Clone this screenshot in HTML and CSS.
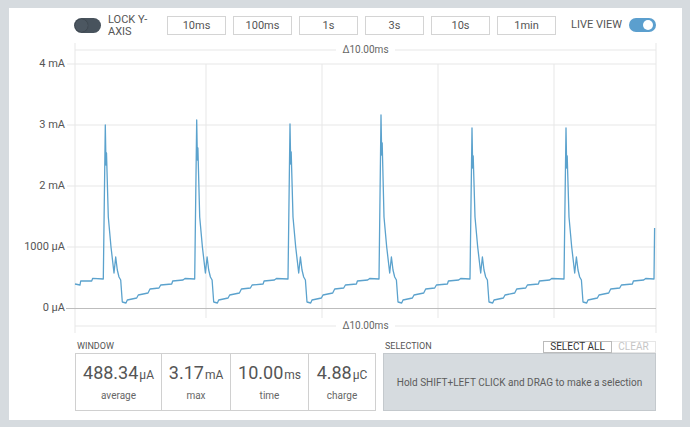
FILE: index.html
```html
<!DOCTYPE html>
<html lang="en">
<head>
  <meta charset="UTF-8">
  <title>Power Profiler</title>
  <link rel="stylesheet" href="styles.css">
</head>
<body>
  <div class="panel">
    <div class="toolbar">
      <div class="toggle toggle-off"><span class="knob"></span></div>
      <div class="lock-label">LOCK Y-AXIS</div>
      <div class="windows">
        <button class="win-btn">10ms</button>
        <button class="win-btn">100ms</button>
        <button class="win-btn">1s</button>
        <button class="win-btn">3s</button>
        <button class="win-btn">10s</button>
        <button class="win-btn">1min</button>
      </div>
      <div class="live">
        <span>LIVE VIEW</span>
        <div class="toggle toggle-on"><span class="knob"></span></div>
      </div>
    </div>

    <svg class="chart" width="673" height="294" viewBox="9 43 673 294">
      <g class="frame">
        <line x1="75" y1="42" x2="75" y2="333" />
        <line x1="656" y1="42" x2="656" y2="333" />
        <line x1="75" y1="50" x2="336" y2="50" />
        <line x1="395" y1="50" x2="656" y2="50" />
        <line x1="75" y1="326" x2="336" y2="326" />
        <line x1="395" y1="326" x2="656" y2="326" />
      </g>
      <g class="grid">
        <line x1="67" y1="64" x2="656" y2="64" />
        <line x1="67" y1="125" x2="656" y2="125" />
        <line x1="67" y1="186" x2="656" y2="186" />
        <line x1="67" y1="247" x2="656" y2="247" />
        <line x1="206" y1="64" x2="206" y2="318" />
        <line x1="322" y1="64" x2="322" y2="318" />
        <line x1="438" y1="64" x2="438" y2="318" />
        <line x1="554" y1="64" x2="554" y2="318" />
      </g>
      <line class="zero" x1="66" y1="308.5" x2="656" y2="308.5" />
      <g class="ylabels">
        <text x="65" y="64">4 mA</text>
        <text x="65" y="125">3 mA</text>
        <text x="65" y="186">2 mA</text>
        <text x="65" y="247">1000 µA</text>
        <text x="65" y="308">0 µA</text>
      </g>
      <text class="delta" x="365.5" y="50">Δ10.00ms</text>
      <text class="delta" x="365.5" y="326">Δ10.00ms</text>
      <path id="trace" class="trace" d="" />
    </svg>

    <div class="bottom">
      <div class="window">
        <div class="section-head">
          <span class="section-title">WINDOW</span>
        </div>
        <div class="stats">
          <div class="stat"><div class="value">488.34<small>µA</small></div><div class="name">average</div></div>
          <div class="stat"><div class="value">3.17<small>mA</small></div><div class="name">max</div></div>
          <div class="stat"><div class="value">10.00<small>ms</small></div><div class="name">time</div></div>
          <div class="stat"><div class="value">4.88<small>µC</small></div><div class="name">charge</div></div>
        </div>
      </div>
      <div class="selection">
        <div class="section-head">
          <span class="section-title">SELECTION</span>
          <div class="sel-buttons">
            <button class="sel-btn">SELECT ALL</button>
            <button class="sel-btn sel-btn-disabled">CLEAR</button>
          </div>
        </div>
        <div class="sel-box">Hold SHIFT+LEFT CLICK and DRAG to make a selection</div>
      </div>
    </div>
  </div>

  <script>
    // spike x (peak) and peak y for each cycle
    const spikes = [[105.3, 125], [196.7, 120], [290, 124], [381, 115], [472, 128], [566, 128]];
    // [dx from rise, y, relative to peak?]
    const cycle = [
      [0, 279, false], [2, 0, true], [2.7, 40, true], [3.2, 28, true],
      [5, 217], [7.7, 247], [10.7, 273], [12.4, 257], [14, 270], [15.7, 277],
      [17.4, 280], [19, 302], [22.7, 303], [24, 300], [33.4, 298], [35, 295],
      [44.7, 293], [46.7, 289], [55.7, 288], [57.4, 285], [68.4, 284],
      [69.4, 281], [79.7, 280], [81.7, 278.5]
    ];

    const pts = [[75, 284], [80, 285], [80.7, 281], [91.7, 281], [92.7, 278.3]];
    for (const [peakX, peakY] of spikes) {
      const rise = peakX - 2;
      for (const [dx, y, rel] of cycle) {
        pts.push([rise + dx, rel ? peakY + y : y]);
      }
    }
    pts.push([654, 279], [654.6, 228]);

    document.getElementById("trace").setAttribute("d",
      "M" + pts.map(p => p[0].toFixed(1) + " " + p[1].toFixed(1)).join(" L"));
  </script>
</body>
</html>
```

FILE: styles.css
```css
body {
  margin: 0;
  background-color: #d6dbdf;
  font-family: Roboto, "Liberation Sans", sans-serif;
  color: #555;
}

.panel {
  margin: 8px 0 0 9px;
  width: 673px;
  height: 412px;
  background: white;
  display: flex;
  flex-direction: column;
}

/* top toolbar */
.toolbar {
  height: 35px;
  display: flex;
  align-items: center;
  padding: 0 26px 0 65px;
}

.toggle {
  width: 27px;
  height: 15px;
  border-radius: 8px;
  position: relative;
  box-sizing: border-box;
}

.toggle-off {
  background-color: #48535d;
}

.toggle-off .knob {
  position: absolute;
  left: 1px;
  top: 1px;
  width: 13px;
  height: 13px;
  border-radius: 50%;
  background-color: #4c5761;
  box-shadow: 0 0 1px rgba(0,0,0,0.5);
}

.toggle-on {
  background-color: #5b9fce;
  height: 14px;
}

.toggle-on .knob {
  position: absolute;
  right: 3px;
  top: 2px;
  width: 10px;
  height: 10px;
  border-radius: 50%;
  background-color: white;
}

.lock-label {
  width: 50px;
  margin-left: 7px;
  font-size: 11px;
  line-height: 12px;
  padding-top: 1px;
}

.windows {
  display: flex;
  gap: 7px;
  margin-left: 9px;
}

.win-btn {
  width: 59px;
  height: 19px;
  padding: 0;
  background: white;
  border: 1px solid #d4d4d4;
  font-family: inherit;
  font-size: 11px;
  color: #555;
}

.live {
  margin-left: auto;
  display: flex;
  align-items: center;
  gap: 7px;
  font-size: 11px;
  margin-top: -2px;
}

/* chart */
.chart {
  display: block;
  font-family: Roboto, "Liberation Sans", sans-serif;
}

.frame line, .grid line {
  stroke: #e7e7e7;
  stroke-width: 1;
}

.zero {
  stroke: #bdbdbd;
  stroke-width: 1.2;
}

.ylabels text {
  font-size: 11px;
  fill: #555;
  text-anchor: end;
  dominant-baseline: middle;
}

.delta {
  font-size: 10px;
  fill: #666;
  text-anchor: middle;
  dominant-baseline: middle;
}

.trace {
  fill: none;
  stroke: #5ba2cd;
  stroke-width: 1.3;
  stroke-linejoin: round;
}

/* bottom stats */
.bottom {
  display: flex;
  gap: 7px;
  padding: 0 26px 0 66px;
}

.window {
  width: 301px;
}

.selection {
  flex: 1;
}

.section-head {
  height: 16px;
  display: flex;
  align-items: flex-end;
  justify-content: space-between;
}

.section-title {
  font-size: 9px;
  line-height: 11px;
  padding: 0 0 1px 2px;
}

.stats {
  display: grid;
  grid-template-columns: 86px 69px 78px 1fr;
  border: 1px solid #d0d0d0;
  height: 58px;
  box-sizing: border-box;
}

.stat {
  border-right: 1px solid #d0d0d0;
  text-align: center;
  padding-top: 8px;
}

.stat:last-child {
  border-right: none;
}

.value {
  font-size: 18px;
  line-height: 22px;
  color: #555;
}

.value small {
  font-size: 12px;
  margin-left: 1px;
}

.name {
  font-size: 10px;
  line-height: 14px;
  margin-top: 3px;
  color: #666;
}

.sel-buttons {
  display: flex;
}

.sel-btn {
  height: 12px;
  padding: 0;
  width: 69px;
  background: white;
  border: 1px solid #bbb;
  font-family: inherit;
  font-size: 10px;
  line-height: 10px;
  color: #333;
}

.sel-btn-disabled {
  width: 44px;
  border-color: #e6e6e6;
  border-left: none;
  color: #c6c6c6;
}

.sel-box {
  height: 58px;
  box-sizing: border-box;
  background-color: #d6dbdf;
  border: 1px solid #c4c9cd;
  display: flex;
  align-items: center;
  justify-content: center;
  font-size: 10px;
  color: #5c5c5c;
}
```
